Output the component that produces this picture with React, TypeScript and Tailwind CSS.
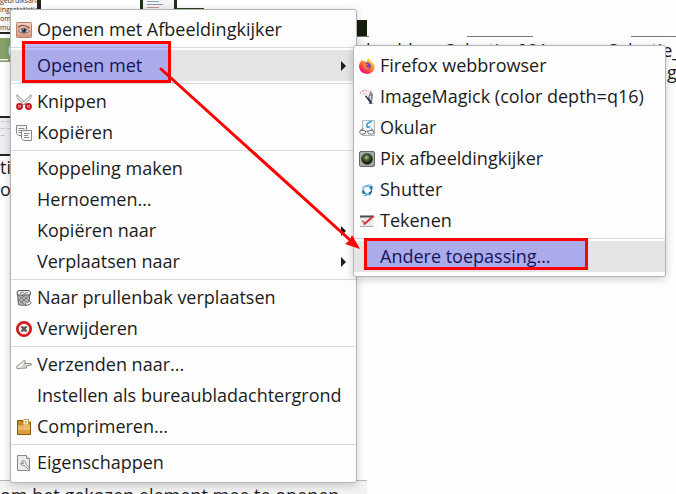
import type { ReactNode } from 'react'

interface Entry {
  label: string
  icon?: ReactNode
  submenu?: boolean
  active?: boolean
}

const EyeIcon = () => (
  <svg viewBox="0 0 16 16" className="w-4 h-4">
    <defs>
      <linearGradient id="skin" x1="0" y1="0" x2="0" y2="1">
        <stop offset="0" stopColor="#f3d3c0" />
        <stop offset="1" stopColor="#d99377" />
      </linearGradient>
    </defs>
    <rect x=".5" y=".5" width="15" height="15" rx="1" fill="url(#skin)" stroke="#b9826c" />
    <path d="M2 5.2C4.500 3 9 3 13.500 6" fill="none" stroke="#73503f" strokeWidth="1.300" />
    <path d="M2.500 9C5 5.500 10 5.500 13.500 9.500 10 11.500 6 11.500 2.500 9z" fill="#efe9ea" stroke="#6b4436" strokeWidth=".7" />
    <circle cx="8" cy="8.500" r="2.600" fill="#4c5f7b" />
    <circle cx="8" cy="8.300" r="1.300" fill="#111827" />
    <circle cx="7.300" cy="7.600" r=".5" fill="#fff" />
  </svg>
)

const ScissorsIcon = () => (
  <svg viewBox="0 0 16 16" className="w-4 h-4">
    <path d="M1 .7C.8 3 1.500 4.500 3 6l6 5 1.300-1.500z" fill="#f1f1ef" stroke="#777" strokeWidth=".8" />
    <path d="M15 .7c.2 2.300-.5 3.800-2 5.300l-6 5-1.300-1.500z" fill="#f8f8f7" stroke="#777" strokeWidth=".8" />
    <circle cx="3.500" cy="12.500" r="2.400" fill="#f7c9c9" stroke="#c4121c" strokeWidth="2" />
    <circle cx="12.500" cy="12.500" r="2.400" fill="#f7c9c9" stroke="#c4121c" strokeWidth="2" />
    <circle cx="3.500" cy="12.500" r=".8" fill="#c4121c" />
    <circle cx="12.500" cy="12.500" r=".8" fill="#c4121c" />
  </svg>
)

const CopyIcon = () => (
  <svg viewBox="0 0 16 16" className="w-4 h-4" stroke="#888a85">
    <path d="M.5.5h10v10h-8l-2-2z" fill="#f6f6f4" />
    <path d="M2.500 3.500h6M2.500 5.500h5M2.500 7.500h3" />
    <path d="M5.500 5.500h10v10H7.500l-2-2z" fill="#f6f6f4" />
    <path d="M8 8.500h5.500M8 10.500h4M8 12.500h5" />
  </svg>
)

const TrashIcon = () => (
  <svg viewBox="0 0 16 16" className="w-4 h-4">
    <path d="M1.500 3.500 2.500 14.500c1.500 1 8 1 10 0l1.500-11z" fill="#c3c5c1" stroke="#555753" />
    <path d="M3 6l9 7M3 10l5 4M6 5l6.500 5M12.500 6 4 13.500M9 5l-6 5" stroke="#565855" strokeWidth=".8" />
    <path d="M1 1.500 3 .5h10l1.500 1.500-.5 3H1.500z" fill="#eeeeec" stroke="#555753" />
    <path d="M4 3.500 6.500 2l2 1.500 3-1" fill="none" stroke="#777" />
    <path d="M9.500 13.500c1-2 3-1 3.500-2s2.500 0 2 1.500-3 2.500-5.500 2z" fill="#f3f3f1" stroke="#555753" strokeWidth=".8" />
  </svg>
)

const DeleteIcon = () => (
  <svg viewBox="0 0 16 16" className="w-4 h-4">
    <circle cx="8" cy="8" r="6.500" fill="#f4f4f2" stroke="#dc2020" strokeWidth="2.600" />
    <circle cx="8" cy="8" r="7.600" fill="none" stroke="#b00c0c" strokeWidth=".6" />
    <path d="m5.500 5.500 5 5m0-5-5 5" stroke="#555753" strokeWidth="2.400" />
  </svg>
)

const SendIcon = () => (
  <svg viewBox="0 0 16 16" className="w-4 h-4" strokeLinejoin="round">
    <path d="M.6 9.500 8 3.500l1.500.5-1 2.500H15l.5 1.500-5 .8v2.200L1 11.500z" fill="#f0f0ed" stroke="#7f817c" strokeWidth=".9" />
    <path d="M7 7.500 10 8M6 9.500l4 .4" fill="none" stroke="#a5a7a2" strokeWidth=".8" />
  </svg>
)

const ArchiveIcon = () => (
  <svg viewBox="0 0 16 16" className="w-4 h-4">
    <path d="M1.500 3V1.500h5V3h8v12.500h-13z" fill="#c98a2b" stroke="#8f5902" />
    <path d="M7 6V1.500l2-1h3.500V6z" fill="#fbf1dc" stroke="#b07a2a" strokeWidth=".8" />
    <path d="M8.500 2.500h2.500M8.500 4h2.500" stroke="#b98c4a" strokeWidth=".7" />
    <path d="M2 6.500h5l1.500-1H14v9.500H2z" fill="#e9b96e" />
    <path d="M2 11h12v4H2z" fill="#d99c3f" />
  </svg>
)

const PropertiesIcon = () => (
  <svg viewBox="0 0 16 16" className="w-4 h-4">
    <path d="M1.500.5h9l3 3v12h-12z" fill="#ececea" stroke="#888a85" />
    <path d="M10.500.5v3h3" fill="#fff" stroke="#888a85" />
    <path d="M5.500 6.500c2-1.500 5-.3 4 2.300l3.500 3.700-1.200 1.300-3.800-3.600C6 11 4.300 9.500 5 8l2 .8.7-1.100z" fill="#fff" stroke="#777975" strokeWidth=".9" />
  </svg>
)

const FirefoxIcon = () => (
  <svg viewBox="0 0 16 16" className="w-4 h-4">
    <defs>
      <linearGradient id="fire" x1=".85" y1=".05" x2=".2" y2=".9">
        <stop offset="0" stopColor="#fff24a" />
        <stop offset=".4" stopColor="#ff9a1f" />
        <stop offset=".75" stopColor="#ff3b47" />
        <stop offset="1" stopColor="#e31587" />
      </linearGradient>
    </defs>
    <path d="M2 3.500C2 2.500 2.500 2 3 1.500c.2.800.6 1.400 1.200 1.800C6 3 7 3.300 8 4c-.2-1.500.4-3 2-4 .2 1.800 1.500 2.300 2.500 3.500.5.300.7.800.8 1.200C16 6.500 16.300 10 14.500 12.500 12.500 15.500 9 16.500 5.500 15.500 1.500 14-.5 10.500.2 7 .5 5.500 1 4.300 2 3.500z" fill="url(#fire)" />
    <circle cx="8.200" cy="8.200" r="3.600" fill="#7441d8" />
    <path d="M4.500 5.500c1.500-.8 3 .3 4.500.8-.3 1-2 1-2 2 .5 1.500 2.500 1.700 4 .7-.8 2.500-4 3.500-6 1.500-1-1-1.300-3-.5-5z" fill="#ff7a2a" />
  </svg>
)

const ImageMagickIcon = () => (
  <svg viewBox="0 0 16 16" className="w-4 h-4">
    <path d="M1 4.500C3 1.500 6.500.5 9.500 2.500" fill="none" stroke="#f0a3a3" strokeWidth="1.600" strokeDasharray="2 1" />
    <path d="M2.500 5.500 6.500 4l3 3" fill="none" stroke="#e3bdbd" />
    <path d="M11.500 1.500 14 5.500l-1 8.500 1.500 1H9.500l1-1.500L8.500 10z" fill="#7b8093" />
    <path d="M11.500 1.500 13 5 10 8.500z" fill="#a58d7c" />
    <path d="M5.500 6.500 7.500 7l5 6-.5 2z" fill="#20264d" />
    <path d="M10.500 8 12 6.500v5z" fill="#eef0f6" />
  </svg>
)

const OkularIcon = () => (
  <svg viewBox="0 0 16 16" className="w-4 h-4" fill="none">
    <path d="M3.500.5h12v15h-12z" fill="#f3f5f6" stroke="#b5b9bb" />
    <path d="M13 1.500C9 2 7 4.500 8 6.500c1 1.500 2.500.8 3-.3" stroke="#2d96cf" strokeWidth="1.500" />
    <rect x=".7" y="10.500" width="5.800" height="3.500" rx="1.500" fill="#fafafa" stroke="#6c7072" />
    <rect x="9" y="10.500" width="5.800" height="3.500" rx="1.500" fill="#fafafa" stroke="#6c7072" />
    <path d="M1 10.500 4.500 8.500M6.500 11.500q1.300-1 2.500 0M14.500 10.500 12 8.500" stroke="#6c7072" />
  </svg>
)

const PixIcon = () => (
  <svg viewBox="0 0 16 16" className="w-4 h-4">
    <defs>
      <radialGradient id="lens" cx=".45" cy=".35" r=".6">
        <stop offset="0" stopColor="#b7c9a8" />
        <stop offset=".4" stopColor="#4e6a3d" />
        <stop offset="1" stopColor="#11170e" />
      </radialGradient>
    </defs>
    <rect x=".5" y=".5" width="15" height="15" rx="1.500" fill="#a9aaa6" stroke="#666864" />
    <circle cx="8" cy="8" r="5.800" fill="#30332f" />
    <circle cx="8" cy="8" r="5" fill="url(#lens)" />
  </svg>
)

const ShutterIcon = () => (
  <svg viewBox="0 0 16 16" className="w-4 h-4">
    <path d="M5 6C5 3 8.500 2 13 2.500 10.500 3 9.500 4 9 5.500 7.500 4.800 6 5 5 6z" fill="#6fb3dc" />
    <path d="M9.500 5C11 3.500 12.500 3.500 13.500 4 14 6 13.500 8 12 9.500 12 7.500 11 6 9.500 5z" fill="#2e7fae" />
    <path d="M12.500 7.500C14 9.500 12 13 9.500 13.500 10 12 10 11 9.500 10.500 11 10 12 9 12.500 7.500z" fill="#1d6592" />
    <path d="M10.500 10.500C10 13.500 7 14.500 4 14 6 13 6.500 12 6.500 11 8 11.500 9.500 11.300 10.500 10.500z" fill="#6fb3dc" />
    <path d="M7.500 11.200C5.500 12.500 4 12 3 11 2.800 9 3.500 7.500 4.500 6.500 4.800 8.500 5.800 10.500 7.500 11.200z" fill="#2e7fae" />
    <path d="M4.500 8.500C2.500 7.500 3 5 4.500 3.500 5 4.500 5.500 5 6.500 5 5.300 5.800 4.600 7 4.500 8.500z" fill="#8fc8e8" />
  </svg>
)

const DrawingIcon = () => (
  <svg viewBox="0 0 16 16" className="w-4 h-4">
    <path d="M1 2.500h13.500v11H1z" fill="#ececec" />
    <path d="M1 2.500h13.500v2H1z" fill="#4a4e55" />
    <path d="M1 13.500h13.500" stroke="#aaa" />
    <path d="M3 7.500 6 10.500" stroke="#d24a4a" strokeWidth="1.200" />
    <path d="m6 10.500 8.500-7.500" stroke="#dd2c33" strokeWidth="2" />
    <path d="m4.500 12 .5-2.500 2 1.800z" fill="#b3242a" />
  </svg>
)

const mainGroups: Entry[][] = [
  [{ label: 'Openen met Afbeeldingkijker', icon: <EyeIcon /> }],
  [{ label: 'Openen met', submenu: true, active: true }],
  [
    { label: 'Knippen', icon: <ScissorsIcon /> },
    { label: 'Kopiëren', icon: <CopyIcon /> },
  ],
  [
    { label: 'Koppeling maken' },
    { label: 'Hernoemen…' },
    { label: 'Kopiëren naar', submenu: true },
    { label: 'Verplaatsen naar', submenu: true },
  ],
  [
    { label: 'Naar prullenbak verplaatsen', icon: <TrashIcon /> },
    { label: 'Verwijderen', icon: <DeleteIcon /> },
  ],
  [
    { label: 'Verzenden naar...', icon: <SendIcon /> },
    { label: 'Instellen als bureaubladachtergrond' },
    { label: 'Comprimeren…', icon: <ArchiveIcon /> },
  ],
  [{ label: 'Eigenschappen', icon: <PropertiesIcon /> }],
]

const openWithGroups: Entry[][] = [
  [
    { label: 'Firefox webbrowser', icon: <FirefoxIcon /> },
    { label: 'ImageMagick (color depth=q16)', icon: <ImageMagickIcon /> },
    { label: 'Okular', icon: <OkularIcon /> },
    { label: 'Pix afbeeldingkijker', icon: <PixIcon /> },
    { label: 'Shutter', icon: <ShutterIcon /> },
    { label: 'Tekenen', icon: <DrawingIcon /> },
  ],
  [{ label: 'Andere toepassing…', active: true }],
]

function ContextMenu({ label, groups }: { label: string; groups: Entry[][] }) {
  return (
    <div
      role="menu"
      aria-label={label}
      className="rounded-[3px] border border-[#b4b4b4] bg-[#fdfdfd] py-1 shadow-[0_2px_8px_rgba(0,0,0,0.2)]"
    >
      {groups.map((group, i) => (
        <div key={i} role="group" className={i > 0 ? 'mt-0.5 border-t border-[#dadada] pt-0.5' : ''}>
          {group.map((entry) => (
            <button
              key={entry.label}
              type="button"
              role="menuitem"
              aria-haspopup={entry.submenu ? 'menu' : undefined}
              className={`flex w-full h-[31px] items-center gap-[5px] pl-[5px] pr-2.5 text-left whitespace-nowrap hover:bg-[#e4e4e4] ${
                entry.active ? 'bg-[#e4e4e4]' : ''
              }`}
            >
              <span className="w-4 h-4 shrink-0">{entry.icon}</span>
              <span className="flex-1">{entry.label}</span>
              {entry.submenu && (
                <svg viewBox="0 0 5 10" className="w-[5px] h-2.5 shrink-0">
                  <path d="M0 0l5 5-5 5z" fill="#1c1c1c" />
                </svg>
              )}
            </button>
          ))}
        </div>
      ))}
    </div>
  )
}

// File manager icons and status bar behind the menus
function FileView() {
  return (
    <div className="absolute inset-0 flex flex-col overflow-hidden whitespace-nowrap leading-[22px]">
      <div className="flex flex-1 items-start">
        <div className="flex w-[140px] shrink-0 flex-col items-start">
          <div className="h-[34px] w-[41px] overflow-hidden border-r-4 border-b-2 border-[#20241b] bg-[#fafafa] text-[7px] leading-[9px] text-[#333]">
            <p className="-mt-1">gebruiksanalyse</p>
            <p>ingsstatistieken</p>
            <p>omberek</p>
            <p>mulieren</p>
          </div>
          <div className="mt-1 h-6 w-6 bg-[#87a268] leading-6 text-white">_0</div>
          <div className="mt-[54px] h-10 w-6 border-y-2 border-[#252525] bg-[#ededf1] text-[5px] leading-[7px] text-[#999]">
            <p>— —</p>
            <p>— —</p>
            <p>—</p>
          </div>
          <p>ti</p>
          <p>or</p>
        </div>

        <div className="flex w-[160px] shrink-0 items-end">
          <div className="flex h-[9px] w-[37px] flex-col gap-0.5 border-x-3 border-[#203016] bg-[#f4f4f4] pt-px pl-1">
            <div className="h-px w-3 bg-[#8fa0b0]" />
            <div className="h-px w-4 bg-[#8d92c8]" />
            <div className="h-px w-3 bg-[#c99090]" />
          </div>
          <div className="h-px w-[27px] bg-[#2c4420]" />
        </div>

        <div className="w-[145px] shrink-0 pt-5">
          <div className="h-4 w-[67px] bg-[#15200f]" />
          <div className="mb-0.5 h-px w-[69px] bg-[#777]" />
          <p className="pl-7">voorbeeld</p>
        </div>
        <div className="w-[163px] shrink-0 pt-9">
          <div className="mb-0.5 ml-[22px] h-px w-[66px] bg-[#777]" />
          <p>Selectie_001</p>
        </div>
        <div className="flex-1 pt-9">
          <div className="mb-0.5 ml-[23px] h-px bg-[#777]" />
          <p>Selectie_</p>
          <p className="pl-12">ng</p>
        </div>
      </div>

      <footer className="h-3.5 w-[367px] border-t border-[#b9b9b9] bg-[#f2f2f2] leading-7">
        om het gekozen element mee te openen
      </footer>
    </div>
  )
}

// Red frames and the arrow that link the two highlighted entries
function Annotations() {
  return (
    <div className="pointer-events-none absolute inset-0">
      <div className="absolute left-[22px] top-[41px] w-[149px] h-[42px] border-3 border-[#ff0000] bg-[#0000ff]/25" />
      <div className="absolute left-[364px] top-[238px] w-[224px] h-8 border-3 border-[#ff0000] bg-[#0000ff]/25" />
      <svg viewBox="0 0 362 252" className="absolute left-0 top-0 w-[362px] h-[252px]">
        <path d="M161 69 350 240" stroke="#ff0000" strokeWidth="3" strokeLinecap="round" />
        <path d="M360 249 345 244l4.500-3.500L352 235z" fill="#ff0000" />
      </svg>
    </div>
  )
}

export default function App() {
  return (
    <div className="relative min-h-screen overflow-hidden bg-[#fefefe] font-['Open_Sans','Noto_Sans',sans-serif] text-[18px] text-[#1c1c1c]">
      <FileView />
      <main className="relative flex items-start pl-2.5 pt-[9px]">
        <div className="min-w-[347px]">
          <ContextMenu label="Bestand" groups={mainGroups} />
        </div>
        <div className="-ml-1 mt-9 min-w-[313px]">
          <ContextMenu label="Openen met" groups={openWithGroups} />
        </div>
      </main>
      <Annotations />
    </div>
  )
}
